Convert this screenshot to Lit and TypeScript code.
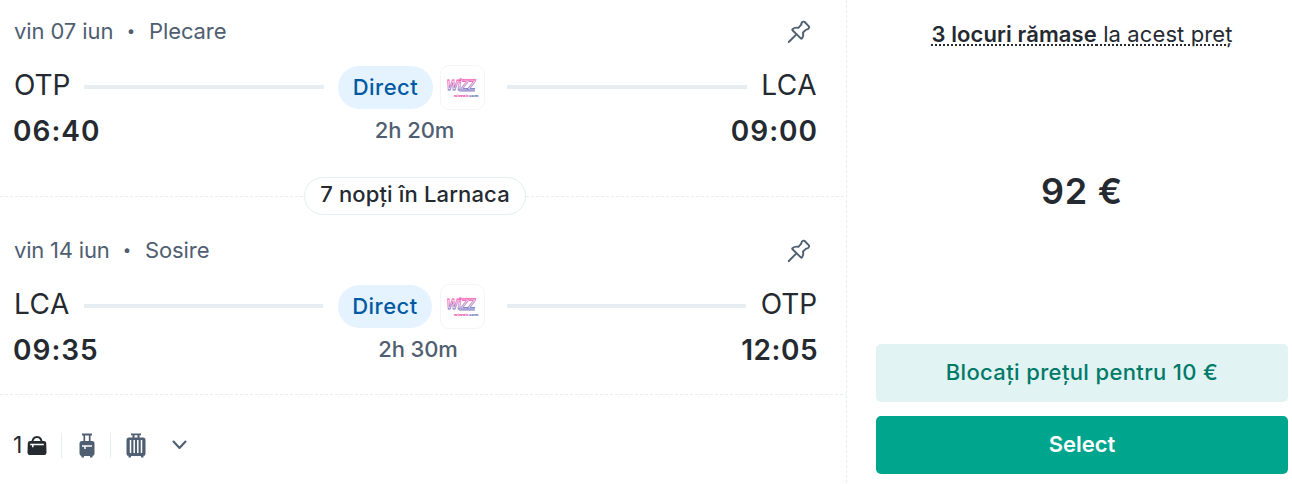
import { LitElement, html, css, svg } from "lit";
import { customElement, property } from "lit/decorators.js";

interface Leg {
  date: string;
  kind: string;
  from: string;
  to: string;
  departs: string;
  arrives: string;
  duration: string;
}

const outbound: Leg = { date: "vin 07 iun", kind: "Plecare", from: "OTP", to: "LCA", departs: "06:40", arrives: "09:00", duration: "2h 20m" };
const inbound: Leg = { date: "vin 14 iun", kind: "Sosire", from: "LCA", to: "OTP", departs: "09:35", arrives: "12:05", duration: "2h 30m" };

@customElement("airline-logo")
class AirlineLogo extends LitElement {
  static styles = css`
    :host { display: block; width: 45px; height: 45px; box-sizing: border-box; border: 1px solid #f3f5f7; border-radius: 9px; background: #fff; }
    svg { display: block; overflow: visible; }
    .mark { font: italic 700 15px "Liberation Sans", sans-serif; fill: #fff; stroke: url(#fade); stroke-width: 0.8px; }
    .site { font: 700 4.4px "Liberation Sans", sans-serif; fill: url(#site); }
  `;
  render() {
    return html`<svg width="43" height="43" viewBox="0 0 43 43">
      <defs>
        <linearGradient id="fade" x1="0" y1="0" x2="0.15" y2="1">
          <stop offset="0.3" stop-color="#f04fae" />
          <stop offset="0.85" stop-color="#6a6cc0" />
        </linearGradient>
        <linearGradient id="site"><stop offset="0.55" stop-color="#e0369c" /><stop offset="0.7" stop-color="#4a4fa8" /></linearGradient>
      </defs>
      <text class="mark" transform="translate(5.8 24.4) scale(.78 1)">WiZZ</text>
      <path d="M19 13.4H35.5" stroke="#f26ab8" stroke-width="0.7" />
      <path d="M18 25.2h16" stroke="#8a70c0" stroke-width="0.7" />
      <text class="site" x="13" y="30.6">wizzair.com</text>
    </svg>`;
  }
}

@customElement("flight-leg")
class FlightLeg extends LitElement {
  @property({ attribute: false }) leg!: Leg;

  static styles = css`
    :host { display: block; padding: 15px 29px 0 14px; height: 197px; box-sizing: border-box; }
    .head { display: flex; align-items: center; height: 32px; font-size: 22px; line-height: 32px; color: #4f5e71; }
    .date { width: 99px; white-space: nowrap; letter-spacing: -0.1px; }
    .narrow { width: 95px; letter-spacing: -0.2px; }
    .dot { width: 36px; text-align: center; font-size: 15px; }
    .kind { flex: 1; letter-spacing: -0.1px; }
    .pin { margin-right: 6px; margin-top: 2px; }
    .route { display: grid; grid-template-columns: 70px 240px 14px 147px 22px 240px 1fr; align-items: center; height: 45px; margin-top: 18px; }
    .back { grid-template-columns: 70px 239px 15px 147px 22px 239px 1fr; }
    .code { font-size: 28px; line-height: 40px; margin-top: -5px; font-weight: 400; letter-spacing: -0.1px; color: #252a31; }
    .lca { letter-spacing: 0.5px; }
    .end { text-align: right; }
    .line { height: 4px; margin-top: -1px; background: #e8edf1; }
    .a { grid-column: 2; }
    .b { grid-column: 6; }
    .stops { grid-column: 4; display: flex; gap: 7px; align-items: center; }
    .pill { width: 95px; height: 43px; border-radius: 22px; background: #e5f2ff; color: #005aa3; font-size: 22px; font-weight: 500; line-height: 43px; text-align: center; letter-spacing: 0.5px; }
    .back .pill { width: 94px; margin-right: 1px; line-height: 42px; }
    .times { display: grid; grid-template-columns: 1fr 120px 1fr; height: 42px; line-height: 42px; color: #252a31; font-weight: 600; font-size: 28px; letter-spacing: 1px; margin: 0 -1px; }
    .duration { font-size: 22px; font-weight: 500; color: #4f5e71; text-align: center; line-height: 40px; letter-spacing: -0.1px; margin-left: -2px; }
    .shifted { padding-left: 7px; }
    .late { letter-spacing: 0.5px; }
  `;
  render() {
    const l = this.leg;
    const home = l.kind === "Sosire";
    return html`
      <div class="head">
        <span class="date ${home ? "narrow" : ""}">${l.date}</span><span class="dot">•</span><span class="kind">${l.kind}</span>
        <svg class="pin" width="24" height="24" viewBox="0 0 24 24" fill="none" stroke="#4f5e71" stroke-width="1.9" stroke-linecap="round" stroke-linejoin="round">
          <path d="M1.8 22 8.4 15.4M5.5 9.2C7 7.8 9.2 7.4 11.4 7.9L14.3 4.7C14.2 3.4 15 2.1 16.3 1.7Q17 1.4 17.7 2L21.9 6.3Q22.5 7 22 7.8C21.4 9 20.3 9.7 19.1 9.6L16 12.5C16.5 14.7 16.2 17 14.8 18.5Q14.3 18.9 13.8 18.4L5.5 10.2Q5 9.7 5.5 9.2Z" />
        </svg>
      </div>
      <div class="route ${home ? "back" : ""}">
        <span class="code ${home ? "lca" : ""}">${l.from}</span><span class="line a"></span>
        <div class="stops"><span class="pill">Direct</span><airline-logo></airline-logo></div>
        <span class="line b"></span><span class="code end ${home ? "" : "lca"}">${l.to}</span>
      </div>
      <div class="times"><span>${l.departs}</span><span class="duration ${home ? "shifted" : ""}">${l.duration}</span><span class="end ${home ? "late" : ""}">${l.arrives}</span></div>
    `;
  }
}

const personalItem = svg`<path d="M5 7.5Q5.5 1 10 1T15 7.5" fill="none" stroke="#252a31" stroke-width="1.8"/><path d="M3 5H17Q19 5 19.2 7L19.5 16.5Q19.5 19 17.3 19H2.7Q.5 19 .5 16.5L.8 7Q1 5 3 5Z" fill="#252a31"/><path d="M3.2 8.5H16.8M5.8 8.5V11.3" stroke="#fff" stroke-width="1.5"/>`;
const cabinBag = svg`<path d="M3 .5H13V2.5H3Z"/><path d="M5.3 2V9M10.7 2V9" stroke="#4f5e71" stroke-width="1.7"/><path d="M3 8H13Q15.5 8 15.5 10.5V20Q15.5 23 13 23H3Q.5 23 .5 20V10.5Q.5 8 3 8ZM2.5 22H5V24.5H2.5ZM11 22H13.5V24.5H11Z"/><path d="M3 13H13M6 13V16" stroke="#fff" stroke-width="1.5"/>`;
const checkedBag = svg`<path d="M5 .5H15V2.3H5ZM6.5 2H8.5V5H6.5ZM11.5 2H13.5V5H11.5ZM3 4.5H17Q19.5 4.5 19.5 7V20.5Q19.5 23 17 23H3Q.5 23 .5 20.5V7Q.5 4.5 3 4.5ZM2.5 22H5V24.5H2.5ZM15 22H17.5V24.5H15Z"/><path d="M4.5 7V20M8.2 7V20M11.8 7V20M15.5 7V20" stroke="#fff" stroke-width="1.5"/>`;

@customElement("app-root")
class AppRoot extends LitElement {
  static styles = css`
    :host { display: flex; width: 1292px; height: 484px; background: #fff; overflow: hidden; font-family: Inter, "Noto Sans", sans-serif; color: #252a31; }
    .trip { width: 846px; flex: none; }
    .row, .rule { height: 1px; background: repeating-linear-gradient(90deg, #e8edf1 0 3px, transparent 3px 5px); }
    .stay { display: flex; align-items: center; height: 40px; margin-top: -21px; }
    .before { width: 304px; }
    .after { flex: 1; }
    .nights { width: 222px; height: 38px; box-sizing: border-box; border: 1.5px solid #e8edf1; border-radius: 19px; background: #fff; text-align: center; font-size: 22px; font-weight: 500; line-height: 33px; white-space: nowrap; letter-spacing: 0.15px; }
    .second { margin-top: 3px; height: 175px; }
    .bags { display: flex; align-items: center; height: 26px; margin: 37px 0 0 13px; }
    .count { font-size: 23px; width: 14px; line-height: 24px; }
    .split { width: 1px; height: 25px; background: #e8edf1; }
    .item { margin: 1px 14px 0 0; }
    .cabin { margin: 0 15px 0 17px; }
    .checked { margin: 0 26px 0 15px; }
    .divider { width: 1px; flex: none; background: repeating-linear-gradient(180deg, #e8edf1 0 3px, transparent 3px 5px); }
    .offer { width: 412px; margin-left: 29px; display: flex; flex-direction: column; text-align: center; }
    .left { margin-top: 18px; height: 32px; line-height: 32px; font-size: 22px; white-space: nowrap; letter-spacing: 0.1px; }
    .left span { text-decoration: underline dotted 2px; text-underline-offset: 2px; }
    .left b { font-weight: 600; }
    .price { margin-top: 116px; height: 50px; line-height: 50px; font-size: 36px; font-weight: 600; letter-spacing: 0.8px; }
    .btn { height: 58px; border-radius: 5px; box-sizing: border-box; line-height: 56px; font-size: 22px; }
    .lock { margin-top: 128px; background: #e1f3f2; color: #007a69; font-weight: 500; letter-spacing: 0.36px; }
    .select { margin-top: 14px; background: #00a58e; color: #fff; font-weight: 600; }
  `;
  render() {
    return html`
      <div class="trip">
        <flight-leg .leg=${outbound}></flight-leg>
        <div class="stay"><span class="rule before"></span><span class="nights">7 nopți în Larnaca</span><span class="rule after"></span></div>
        <flight-leg class="second" .leg=${inbound}></flight-leg>
        <div class="row"></div>
        <div class="bags">
          <span class="count">1</span>
          <svg class="item" width="20" height="20" viewBox="0 0 20 20">${personalItem}</svg>
          <span class="split"></span>
          <svg class="cabin" width="16" height="25" viewBox="0 0 16 25" fill="#4f5e71">${cabinBag}</svg>
          <span class="split"></span>
          <svg class="checked" width="20" height="25" viewBox="0 0 20 25" fill="#4f5e71">${checkedBag}</svg>
          <svg width="15" height="10" viewBox="0 0 15 10" fill="none" stroke="#4f5e71" stroke-width="2.1" stroke-linecap="round" stroke-linejoin="round"><path d="M1.5 1.5 7.5 8 13.5 1.5" /></svg>
        </div>
      </div>
      <div class="divider"></div>
      <div class="offer">
        <div class="left"><span><b>3 locuri rămase</b> la acest preț</span></div>
        <div class="price">92 €</div>
        <div class="btn lock">Blocați prețul pentru 10 €</div>
        <div class="btn select">Select</div>
      </div>
    `;
  }
}
